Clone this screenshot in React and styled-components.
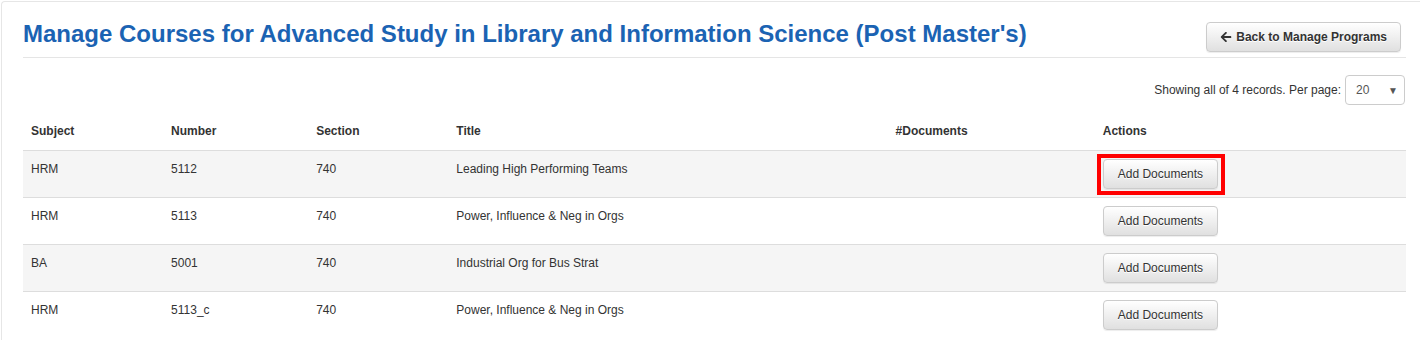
import React from "react";
import styled, { createGlobalStyle } from "styled-components";
import { FaArrowLeft } from "react-icons/fa";

const courses = [
  { subject: "HRM", number: "5112", section: "740", title: "Leading High Performing Teams", docs: "", highlight: true },
  { subject: "HRM", number: "5113", section: "740", title: "Power, Influence & Neg in Orgs", docs: "" },
  { subject: "BA", number: "5001", section: "740", title: "Industrial Org for Bus Strat", docs: "" },
  { subject: "HRM", number: "5113_c", section: "740", title: "Power, Influence & Neg in Orgs", docs: "" },
];

const columns = [
  { label: "Subject", width: 140 },
  { label: "Number", width: 145 },
  { label: "Section", width: 140 },
  { label: "Title", width: 439 },
  { label: "#Documents", width: 207 },
  { label: "Actions", width: 311 },
];

export default function App() {
  return (
    <>
      <GlobalStyle />
      <Panel>
        <Header>
          <Title>Manage Courses for Advanced Study in Library and Information Science (Post Master's)</Title>
          <Button $bold $px={13} $mt={1} $mr={5}>
            <FaArrowLeft size={12} />
            Back to Manage Programs
          </Button>
        </Header>
        <Pager>
          <span>Showing all of 4 records. Per page:</span>
          <Select>
            <span>20</span>
            <Caret>▼</Caret>
          </Select>
        </Pager>
        <Table>
          <colgroup>
            {columns.map((c) => (
              <col key={c.label} style={{ width: c.width }} />
            ))}
          </colgroup>
          <thead>
            <tr>
              {columns.map((c) => (
                <Th key={c.label}>{c.label}</Th>
              ))}
            </tr>
          </thead>
          <tbody>
            {courses.map((row, i) => (
              <Row key={i} $striped={i % 2 === 0}>
                <Td>{row.subject}</Td>
                <Td>{row.number}</Td>
                <Td>{row.section}</Td>
                <Td>{row.title}</Td>
                <Td>{row.docs}</Td>
                <Td>
                  <ActionWrap>
                    <Button>Add Documents</Button>
                    {row.highlight && <Highlight />}
                  </ActionWrap>
                </Td>
              </Row>
            ))}
          </tbody>
        </Table>
      </Panel>
    </>
  );
}

const GlobalStyle = createGlobalStyle`
  html, body {
    margin: 0;
    padding: 0;
    background: #fff;
    overflow: hidden;
  }
  body {
    font-family: "Liberation Sans", Arial, sans-serif;
    font-size: 12px;
    color: #333;
  }
`;

const Panel = styled.div`
  margin: 1px 0 0 1px;
  border: 1px solid #e6e6e6;
  border-right: none;
  border-bottom: none;
  border-radius: 4px 0 0 0;
  padding: 0 14px 0 21px;
  min-height: 340px;
`;

const Header = styled.div`
  display: flex;
  align-items: flex-start;
  justify-content: space-between;
  padding: 19px 0 5px;
  border-bottom: 1px solid #e5e5e5;
`;

const Title = styled.h1`
  margin: 0;
  font-size: 24px;
  line-height: 26px;
  font-weight: bold;
  color: #1b63b3;
`;

const Button = styled.button`
  display: inline-flex;
  align-items: center;
  gap: 4px;
  margin: ${(p) => p.$mt || 0}px ${(p) => p.$mr || 0}px 0 0;
  height: 30px;
  padding: 0 ${(p) => p.$px || 14}px;
  font-family: "Liberation Sans", Arial, sans-serif;
  font-size: 12px;
  font-weight: ${(p) => (p.$bold ? "bold" : "normal")};
  color: #333;
  text-shadow: 0 1px 0 #fff;
  background: linear-gradient(to bottom, #fff 0%, #e0e0e0 100%);
  border: 1px solid #ccc;
  border-radius: 4px;
  box-shadow: inset 0 1px 0 rgba(255, 255, 255, 0.15), 0 1px 1px rgba(0, 0, 0, 0.075);
  white-space: nowrap;
  cursor: pointer;

  svg {
    color: #333;
  }
`;

const Pager = styled.div`
  display: flex;
  justify-content: flex-end;
  align-items: center;
  gap: 4px;
  padding: 17px 1px 0 0;
`;

const Select = styled.div`
  box-sizing: border-box;
  display: flex;
  align-items: center;
  justify-content: space-between;
  width: 60px;
  height: 30px;
  padding: 0 6px 0 10px;
  border: 1px solid #ccc;
  border-radius: 4px;
  background: #fff;
  color: #555;
  font-size: 12px;
`;

const Caret = styled.span`
  font-size: 10px;
  color: #555;
`;

const Table = styled.table`
  width: 100%;
  table-layout: fixed;
  border-collapse: collapse;
  margin-top: 8px;
`;

const Th = styled.th`
  text-align: left;
  vertical-align: bottom;
  padding: 8px 8px 9px;
  line-height: 20px;
  font-weight: bold;
  border-bottom: 1px solid #ddd;
`;

const Row = styled.tr`
  background: ${(p) => (p.$striped ? "#f5f5f5" : "#fff")};
`;

const Td = styled.td`
  vertical-align: top;
  padding: 8px;
  line-height: 20px;
  border-top: 1px solid #ddd;
`;

const ActionWrap = styled.div`
  position: relative;
  display: inline-block;
  vertical-align: top;
`;

const Highlight = styled.span`
  position: absolute;
  top: -5px;
  left: -6px;
  right: -7px;
  bottom: -6px;
  border: 4px solid #f00;
  pointer-events: none;
`;
